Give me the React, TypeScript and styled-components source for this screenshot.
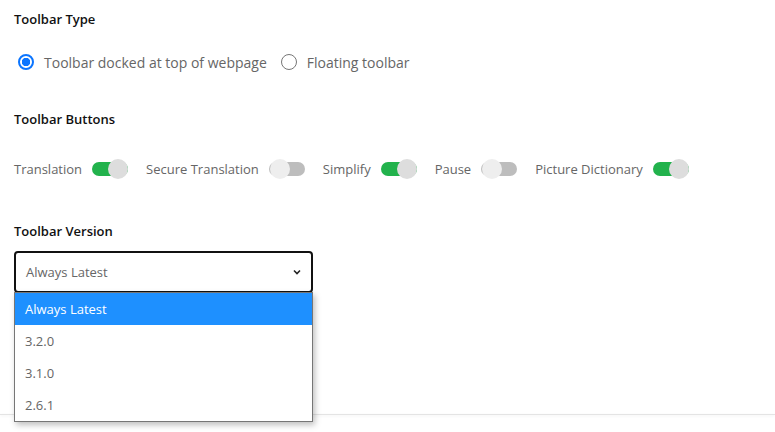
import React from 'react'
import styled, { createGlobalStyle } from 'styled-components'

const GlobalStyle = createGlobalStyle`
  body {
    margin: 0;
    background: #ffffff;
    font-family: "Open Sans", "Liberation Sans", sans-serif;
  }
`

const StyledPage = styled.div`
  position: relative;
  width: 775px;
  height: 432px;
  overflow: hidden;
  padding: 10px 14px 0;
  box-sizing: border-box;
`

const StyledSection = styled.section`
  margin-bottom: 0;
`

const StyledHeading = styled.div`
  font-size: 13px;
  font-weight: 600;
  color: #111111;
  line-height: 18px;
`

const StyledRadioRow = styled.div`
  display: flex;
  align-items: center;
  height: 28px;
  margin-top: 20px;
  margin-bottom: 34px;
`

const StyledRadioLabel = styled.label`
  display: flex;
  align-items: center;
  margin-right: 10px;
  font-size: 14px;
  color: #666666;
`

const StyledRadio = styled.span<{ checked?: boolean }>`
  display: inline-block;
  box-sizing: border-box;
  width: 16px;
  height: 16px;
  margin: 0 10px 0 4px;
  border-radius: 50%;
  border: ${({ checked }) => (checked ? '2px solid #0b75ff' : '1px solid #767676')};
  background: ${({ checked }) =>
    checked ? 'radial-gradient(circle, #0b75ff 0 4px, #ffffff 4.5px)' : '#ffffff'};
`

const StyledToggleRow = styled.div`
  display: flex;
  align-items: center;
  height: 24px;
  margin-top: 29px;
  margin-bottom: 41px;
`

const StyledToggleItem = styled.div`
  display: flex;
  align-items: center;
  margin-right: 18px;
  font-size: 13px;
  color: #666666;
`

const StyledToggle = styled.span<{ on?: boolean }>`
  position: relative;
  display: inline-block;
  width: 36px;
  height: 14px;
  margin-left: 10px;
  border-radius: 7px;
  background: ${({ on }) => (on ? '#22b24c' : '#bdbdbd')};

  &::after {
    content: '';
    position: absolute;
    top: -3px;
    left: ${({ on }) => (on ? '16px' : '1px')};
    width: 20px;
    height: 20px;
    border-radius: 50%;
    background: ${({ on }) => (on ? '#dddddd' : '#eeeeee')};
  }
`

const StyledSelectWrap = styled.div`
  position: relative;
  width: 299px;
  margin-top: 11px;
`

const StyledSelect = styled.div`
  display: flex;
  align-items: center;
  justify-content: space-between;
  box-sizing: border-box;
  height: 42px;
  padding: 0 9px 0 10px;
  border: 2px solid #111111;
  border-radius: 4px;
  font-size: 13px;
  color: #666666;
`

const StyledMenu = styled.ul`
  position: absolute;
  top: 41px;
  left: 0;
  z-index: 2;
  width: 299px;
  box-sizing: border-box;
  margin: 0;
  padding: 0;
  list-style: none;
  background: #ffffff;
  border: 1px solid #767676;
  box-shadow: 2px 3px 6px rgba(0, 0, 0, 0.25);
`

const StyledOption = styled.li<{ active?: boolean }>`
  height: 32px;
  line-height: 32px;
  padding-left: 10px;
  font-size: 13px;
  color: ${({ active }) => (active ? '#ffffff' : '#666666')};
  background: ${({ active }) => (active ? '#1e90ff' : '#ffffff')};
`

const StyledFooterLine = styled.div`
  position: absolute;
  left: 0;
  right: 0;
  top: 414px;
  height: 1px;
  background: #e4e4e4;
  box-shadow: 0 1px 3px rgba(0, 0, 0, 0.08);
`

const toggles = [
  { label: 'Translation', on: true },
  { label: 'Secure Translation', on: false },
  { label: 'Simplify', on: true },
  { label: 'Pause', on: false },
  { label: 'Picture Dictionary', on: true },
]

const versions = ['Always Latest', '3.2.0', '3.1.0', '2.6.1']

const Chevron = () => (
  <svg width="10" height="10" viewBox="0 0 10 10">
    <path d="M2 3.5 L5 6.5 L8 3.5" fill="none" stroke="#222" strokeWidth="1.6" />
  </svg>
)

const App: React.FC = () => {
  return (
    <StyledPage>
      <GlobalStyle />
      <StyledSection>
        <StyledHeading>Toolbar Type</StyledHeading>
        <StyledRadioRow>
          <StyledRadioLabel>
            <StyledRadio checked />
            Toolbar docked at top of webpage
          </StyledRadioLabel>
          <StyledRadioLabel>
            <StyledRadio />
            Floating toolbar
          </StyledRadioLabel>
        </StyledRadioRow>
      </StyledSection>
      <StyledSection>
        <StyledHeading>Toolbar Buttons</StyledHeading>
        <StyledToggleRow>
          {toggles.map((t) => (
            <StyledToggleItem key={t.label}>
              {t.label}
              <StyledToggle on={t.on} />
            </StyledToggleItem>
          ))}
        </StyledToggleRow>
      </StyledSection>
      <StyledSection>
        <StyledHeading>Toolbar Version</StyledHeading>
        <StyledSelectWrap>
          <StyledSelect>
            Always Latest
            <Chevron />
          </StyledSelect>
          <StyledMenu>
            {versions.map((v, i) => (
              <StyledOption key={v} active={i === 0}>
                {v}
              </StyledOption>
            ))}
          </StyledMenu>
        </StyledSelectWrap>
      </StyledSection>
      <StyledFooterLine />
    </StyledPage>
  )
}

export default App
